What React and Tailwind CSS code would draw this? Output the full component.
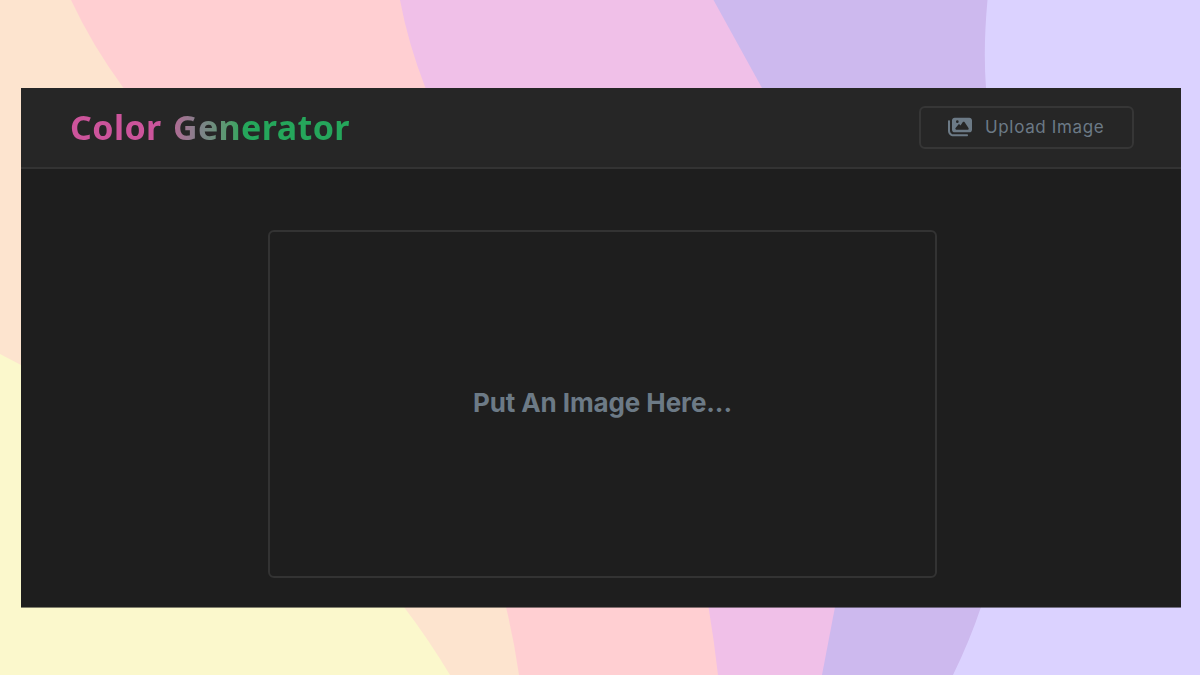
import { FaImages } from "react-icons/fa6";

function Backdrop() {
  return (
    <svg className="absolute inset-0 h-full w-full" viewBox="0 0 1200 675" preserveAspectRatio="none" aria-hidden="true">
      <rect width="1200" height="675" fill="#dbd2ff" />
      <path d="M0 0H987.500Q983 48 986 88L981 607Q970 640 953 675H0Z" fill="#cdb9ee" />
      <path d="M0 0H713.500L762 88L835 607L822 675H0Z" fill="#f0c0e8" />
      <path d="M0 0H400Q408 43 425.500 88L708.500 607Q714 640 718 675H0Z" fill="#ffcfd2" />
      <path d="M0 0H71Q92 45 123.500 88L506 607Q514 640 519 675H0Z" fill="#fde4cf" />
      <path d="M0 354L21 365L404 607Q429 640 450 675H0Z" fill="#fbf8cc" />
    </svg>
  );
}

function Header() {
  return (
    <header className="flex h-[81px] shrink-0 items-center justify-between border-b-2 border-[#333333] bg-[#262626] pr-[47px] pl-[49px]">
      <h1 className="mb-0.5 bg-linear-to-r from-[#cc549b] from-31% via-[#80818a] via-46% to-[#25a65b] to-62% bg-clip-text font-['Noto_Sans',sans-serif] text-[34px] leading-[48px] font-bold tracking-[0.4px] [word-spacing:2px] whitespace-nowrap text-transparent">
        Color Generator
      </h1>
      <button className="flex h-[43px] w-[215px] items-center rounded-md border-2 border-[#363636] pl-[27px] font-['Inter',sans-serif] text-[17px] text-[#6c7a86]">
        <FaImages className="mb-0.5 size-6 shrink-0" />
        <span className="ml-[13px] tracking-[0.65px] whitespace-nowrap">Upload Image</span>
      </button>
    </header>
  );
}

export default function App() {
  return (
    <div className="relative flex h-[675px] w-full flex-col overflow-hidden px-[21px] pt-[88px]">
      <Backdrop />
      <div className="relative flex h-[520px] w-[1160px] flex-col border-b border-[#1e1e1e]/55 bg-[#1e1e1e] bg-clip-padding">
        <Header />
        <main className="flex pt-[61px] pl-[247px]">
          <section className="flex h-[348px] w-[669px] items-center justify-center rounded-md border-2 border-[#333333]">
            <h2 className="mb-0.5 font-['Inter',sans-serif] text-[26px] leading-10 font-bold tracking-[-0.1px] whitespace-nowrap text-[#6c7a86]">
              Put An Image Here...
            </h2>
          </section>
        </main>
      </div>
    </div>
  );
}
